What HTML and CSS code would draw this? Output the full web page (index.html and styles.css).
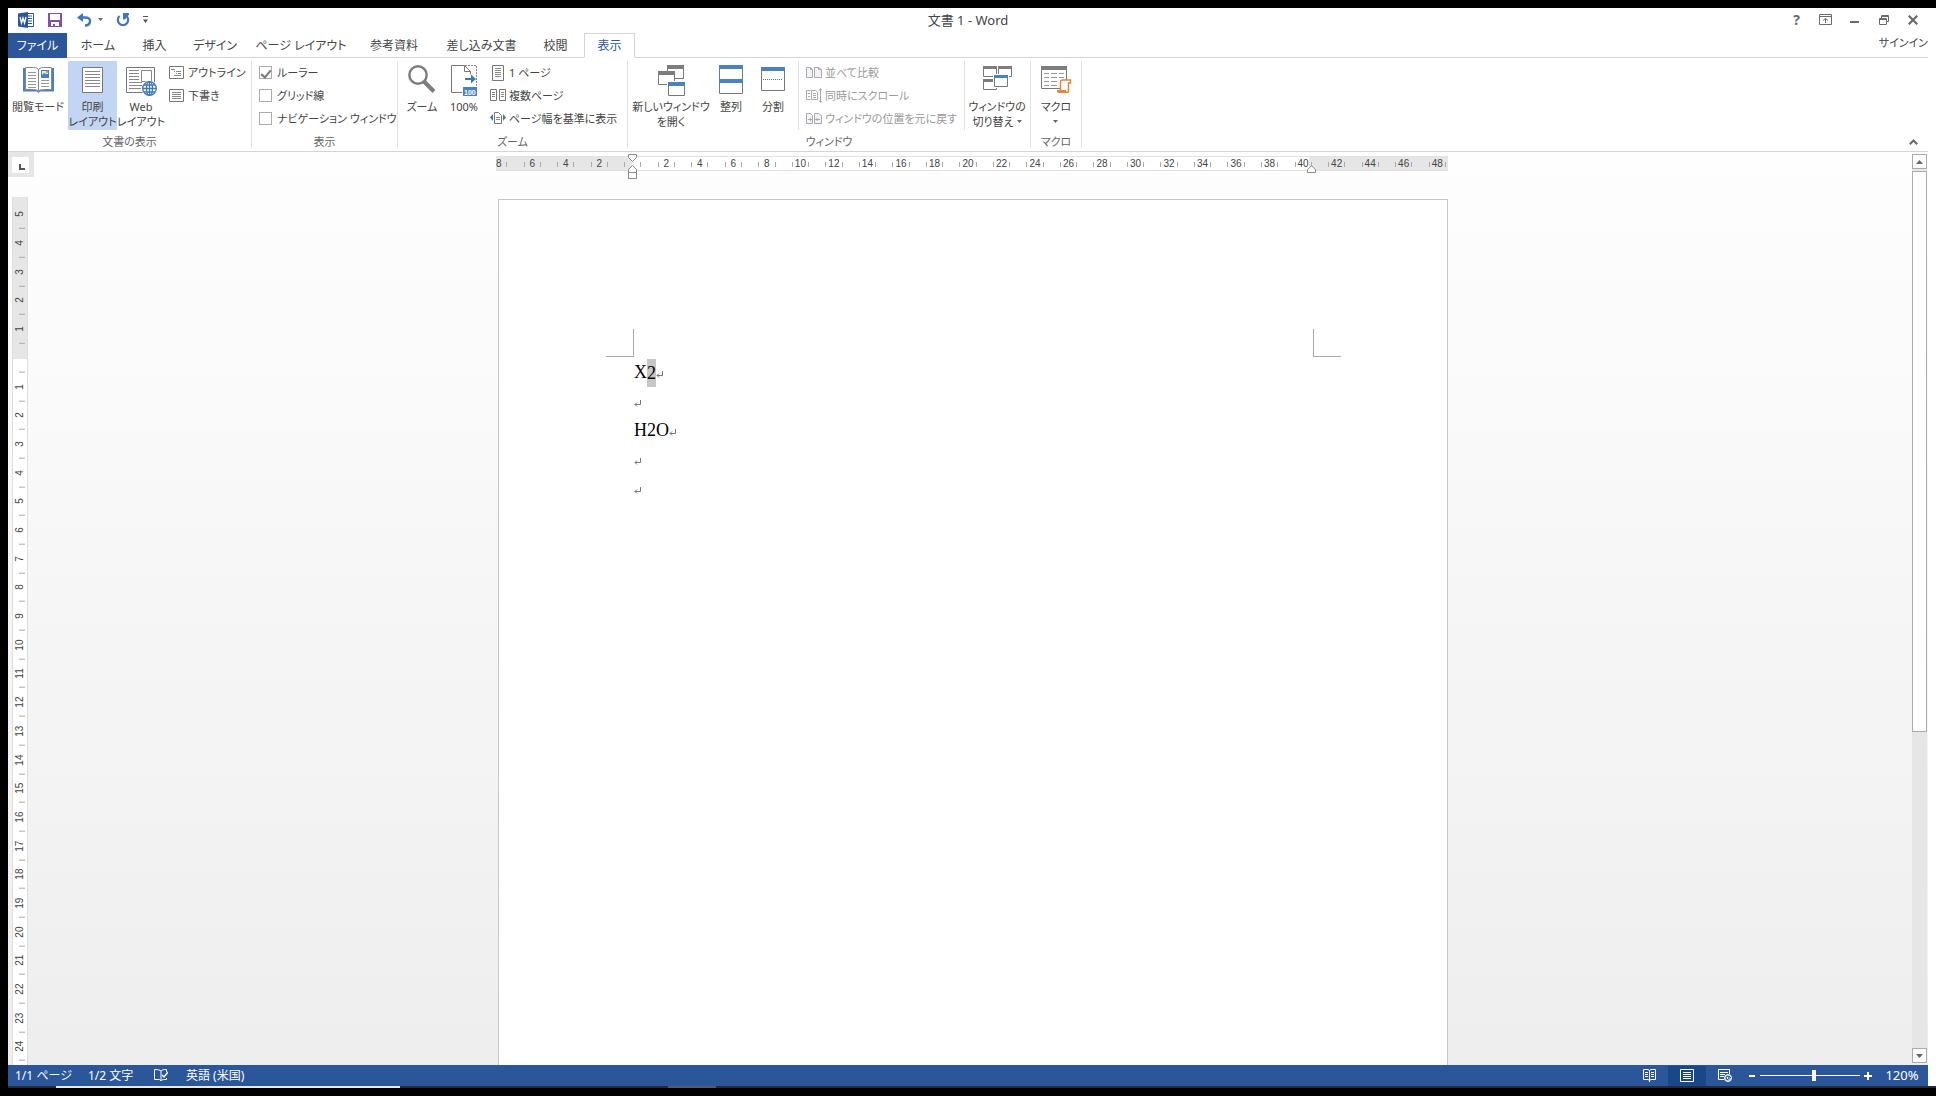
FILE: index.html
```html
<!DOCTYPE html>
<html lang="ja">
<head>
<meta charset="utf-8">
<title>文書 1 - Word</title>
<link rel="stylesheet" href="styles.css">
</head>
<body>
<div class="window">
  <header class="titlebar">
    <div class="quick-access">
      <svg class="word-logo" width="16" height="16" viewBox="0 0 16 16"><path d="M9 1.500h6.500v13H9z" fill="#fff" stroke="#2b579a"/><path d="M10 4h4M10 6.500h4M10 9h4M10 11.500h4" stroke="#2b579a"/><path d="M0 1.500L10 0v16L0 14.500z" fill="#2b579a"/><path d="M2 5l1.500 6L5 6l1.500 5L8 5" fill="none" stroke="#fff" stroke-width="1.300"/></svg>
      <button aria-label="上書き保存"><svg width="14" height="14" viewBox="0 0 14 14"><path d="M0 0h14v14H0zM2 1v6h10V1zM3 9v4h2v-2h2v2h4V9z" fill="#8550a8" fill-rule="evenodd"/></svg></button>
      <button class="undo" aria-label="元に戻す"><svg width="15" height="14" viewBox="0 0 15 14"><path d="M2 4.500h7c6 0 5 8-1 8" fill="none" stroke="#3f78b5" stroke-width="2.400"/><path d="M6 0v9L0 4.500z" fill="#3f78b5"/></svg><svg width="5" height="3" viewBox="0 0 5 3"><path d="M0 0h5L2.500 3z" fill="#666"/></svg></button>
      <button class="redo" aria-label="繰り返し"><svg width="14" height="14" viewBox="0 0 14 14"><path d="M3.500 3a5.200 5.200 0 1 0 7 0" fill="none" stroke="#3f78b5" stroke-width="2.200"/><path d="M7 0h6v1.500L9 6.500H7z" fill="#3f78b5"/></svg></button>
      <button class="customize" aria-label="クイック アクセスのカスタマイズ"><svg width="5" height="7" viewBox="0 0 5 7"><path d="M0 0h5v1H0zM0 3.500h5L2.500 7z" fill="#555"/></svg></button>
    </div>
    <h1 class="doc-title">文書 1 - Word</h1>
    <div class="window-controls">
      <button class="help" aria-label="ヘルプ">?</button>
      <button aria-label="リボンの表示オプション"><svg width="13" height="11" viewBox="0 0 13 11"><path d="M.5.500h12v10H.5zM.5 2.500h12M6.500 9V4.500M4 6.500l2.500-2 2.500 2" fill="none" stroke="#6a6a6a"/></svg></button>
      <button aria-label="最小化"><svg width="9" height="11" viewBox="0 0 9 11"><path d="M0 7h9v2H0z" fill="#6a6a6a"/></svg></button>
      <button aria-label="元のサイズに戻す"><svg width="10" height="10" viewBox="0 0 10 10"><path d="M2.500 3V.5h7v6H7.500M2.500 1.500h7M.5 3.500h7v6h-7zM.5 4.500h7" fill="none" stroke="#6a6a6a"/></svg></button>
      <button aria-label="閉じる"><svg width="10" height="10" viewBox="0 0 10 10"><path d="M.7.700l8.600 8.600M9.300.700L.7 9.300" stroke="#6a6a6a" stroke-width="2.200"/></svg></button>
    </div>
  </header>

  <nav class="tabs">
    <button class="tab file">ファイル</button>
    <button class="tab home">ホーム</button>
    <button class="tab insert">挿入</button>
    <button class="tab design">デザイン</button>
    <button class="tab layout">ページ レイアウト</button>
    <button class="tab refs">参考資料</button>
    <button class="tab mailings">差し込み文書</button>
    <button class="tab review">校閲</button>
    <button class="tab view">表示</button>
    <div class="tab-rest"><a class="signin" href="#">サインイン</a></div>
  </nav>

  <div class="ribbon">
    <section class="group views">
      <div class="group-body">
        <button class="big w60"><span class="icon"><svg width="31" height="28" viewBox="0 0 31 28"><path d="M0 3h3v22h25V3h3v23.500H17L15.500 28 14 26.500H0z" fill="#4a82bd"/><path d="M2.500 2.500h8c3 0 5 1 5 3 0-2 2-3 5-3h8v22h-8c-3 0-5 1-5 2 0-1-2-2-5-2h-8zM15.500 5v21" fill="#fff" stroke="#888"/><path d="M5 7.500h8M5 10.500h8M5 13.500h8M5 16.500h8M5 19.500h8M5 22.500h8M18 15.500h8M18 18.500h8M18 21.500h8" stroke="#999"/><path d="M18 5h8v8h-8z" fill="#4a82bd"/><path d="M19 6h6v3h-2l-2-1-2 2z" fill="#dce8f6"/><path d="M23 6h2v2h-2z" fill="#e8a23a"/></svg></span><span>閲覧モード</span></button>
        <button class="big w49 selected"><span class="icon"><svg width="21" height="28" viewBox="0 0 21 28"><path d="M.5 2.500h20v25H.5z" fill="#fff" stroke="#777"/><path d="M3 6.500h15M3 9.500h15M3 12.500h15M3 15.500h15M3 18.500h15M3 21.500h15" stroke="#888"/></svg></span><span>印刷<br>レイアウト</span></button>
        <button class="big w48"><span class="icon"><svg width="31" height="31" viewBox="0 0 31 31"><path d="M.5 2.500h28v25H.5z" fill="#fff" stroke="#777"/><path d="M3 5.500h10M3 8.500h10M3 11.500h10M3 14.500h10M3 17.500h13M3 20.500h13M3 23.500h12" stroke="#888"/><path d="M15.500 5.500h10v11h-10z" fill="#fff" stroke="#888"/><circle cx="23.500" cy="23.500" r="8" fill="#fff"/><g fill="none" stroke="#3f78b5" stroke-width="1.300"><circle cx="23.500" cy="23.500" r="6.800"/><ellipse cx="23.500" cy="23.500" rx="3" ry="6.800"/><path d="M23.500 17v14M17 23.500h13M18 20h11M18 27h11"/></g></svg></span><span>Web<br>レイアウト</span></button>
        <div class="rows">
          <button class="small"><svg width="16" height="14" viewBox="0 0 16 14"><path d="M.5.500h14v12H.5z" fill="#fff" stroke="#777"/><path d="M2 3.500h4M5 5.500h1M7 5.500h5M7 7.500h1M9 7.500h3M5 9.500h7" stroke="#888"/></svg>アウトライン</button>
          <button class="small"><svg width="16" height="14" viewBox="0 0 16 14"><path d="M.5.500h14v12H.5z" fill="#fff" stroke="#777"/><path d="M3 3.500h9M3 5.500h9M3 7.500h9M3 9.500h9" stroke="#888"/></svg>下書き</button>
        </div>
      </div>
      <h2>文書の表示</h2>
    </section>

    <section class="group show">
      <div class="group-body">
        <div class="rows">
          <label class="check"><input type="checkbox" checked>ルーラー</label>
          <label class="check"><input type="checkbox">グリッド線</label>
          <label class="check"><input type="checkbox">ナビゲーション ウィンドウ</label>
        </div>
      </div>
      <h2>表示</h2>
    </section>

    <section class="group zoom">
      <div class="group-body">
        <button class="big w40"><span class="icon"><svg width="28" height="28" viewBox="0 0 28 28"><circle cx="10" cy="10" r="8.700" fill="#fff" stroke="#7d7d7d" stroke-width="2.400"/><path d="M16 16.500l10 10" stroke="#7d7d7d" stroke-width="4"/></svg></span><span>ズーム</span></button>
        <button class="big w44"><span class="icon"><svg width="27" height="31" viewBox="0 0 27 31"><path d="M11 27.500H.5V.5h13l6 6v3M13.500.500v6h6" fill="none" stroke="#777"/><path d="M14 .5h11.500v21" fill="none" stroke="#888" stroke-dasharray="2 1"/><path d="M14 13h6V9.500l5 4.500-5 4.500V15h-6z" fill="#3f78b5"/><path d="M12 22h14v9H12z" fill="#4a82bd"/><text x="13" y="30" class="badge-text">100</text></svg></span><span>100%</span></button>
        <div class="rows">
          <button class="small"><svg width="16" height="16" viewBox="0 0 16 16"><path d="M2.500.500h11v15h-11z" fill="#fff" stroke="#777"/><path d="M5 3.500h6M5 5.500h6M5 7.500h6M5 9.500h6M5 11.500h6" stroke="#888"/></svg>1 ページ</button>
          <button class="small"><svg width="16" height="13" viewBox="0 0 16 13"><path d="M.5.500h6v11h-6zM9.500.500h6v11h-6z" fill="#fff" stroke="#777"/><path d="M2 3.500h3M2 5.500h3M2 7.500h3M11 3.500h3M11 5.500h3M11 7.500h3" stroke="#888"/></svg>複数ページ</button>
          <button class="small"><svg width="16" height="13" viewBox="0 0 16 13"><path d="M4.500.500h4l3 3v8h-7z" fill="#fff" stroke="#777"/><path d="M6 5.500h4M6 7.500h4" stroke="#888"/><path d="M3 2v7L0 5.500zM13 2v7l3-3.500z" fill="#3f78b5"/></svg>ページ幅を基準に表示</button>
        </div>
      </div>
      <h2>ズーム</h2>
    </section>

    <section class="group windows">
      <div class="group-body">
        <button class="big w80"><span class="icon"><svg width="27" height="31" viewBox="0 0 27 31"><g fill="#fff" stroke="#777"><path d="M9.500.500h16v13h-16z"/><path d="M.5 6.500h16v13H.5z"/></g><path d="M9 0h17v4H9zM0 6h17v4H0z" fill="#7d7d7d"/><path d="M9 16h18v15H9z" fill="#fff"/><path d="M10.500 17.500h16v13h-16z" fill="#fff" stroke="#777"/><path d="M10 17h17v4H10z" fill="#4a82bd"/></svg></span><span>新しいウィンドウ<br>を開く</span></button>
        <button class="big w40"><span class="icon"><svg width="24" height="29" viewBox="0 0 24 29"><path d="M.5.500h23v28H.5z" fill="#fff" stroke="#777"/><path d="M0 0h24v4H0zM0 14h24v4H0z" fill="#4a82bd"/></svg></span><span>整列</span></button>
        <button class="big w44"><span class="icon"><svg width="24" height="27" viewBox="0 0 24 27"><path d="M.5 2.500h23v23H.5z" fill="#fff" stroke="#777"/><path d="M0 2h24v4H0z" fill="#4a82bd"/><path d="M2 14.500h20" stroke="#3f78b5" stroke-dasharray="1 1"/></svg></span><span>分割</span></button>
        <div class="rows side">
          <button class="small" disabled><svg width="16" height="12" viewBox="0 0 16 12"><path d="M.5.500h4l2 2v8h-6zM8.500.500h4l3 2v8h-7zM4.500.500v2h2M12.500.500v2h3" fill="#f6f1f8" stroke="#aaa"/></svg>並べて比較</button>
          <button class="small" disabled><svg width="16" height="15" viewBox="0 0 16 15"><path d="M4.500 2.500h-4v9h4M5.500 2.500h4l2 2v7h-6zM2 5.500h2M2 8.500h2M7 5.500h3M7 7.500h3M7 9.500h3M14.500 1v13M13 2.500l1.500-2 1.500 2M13 12.500l1.500 2 1.500-2" fill="none" stroke="#aaa"/></svg>同時にスクロール</button>
          <button class="small" disabled><svg width="16" height="12" viewBox="0 0 16 12"><path d="M.5.500h4l2 2v8h-6zM8.500.500h4l3 2v8h-7zM2 6.500h4M4.500 5v3M9 6.500h5M11 5v3" fill="#f6f1f8" stroke="#aaa"/></svg>ウィンドウの位置を元に戻す</button>
        </div>
        <button class="big w64"><span class="icon"><svg width="29" height="27" viewBox="0 0 29 27"><path d="M.5 1.500h13v10H.5zM15.500 1.500h13v10h-13zM.5 14.500h13v10H.5z" fill="#fff" stroke="#777"/><path d="M0 1h14v3H0zM15 1h14v3H15zM0 14h14v3H0z" fill="#7d7d7d"/><path d="M10 9h16v14H10z" fill="#fff"/><path d="M11.500 10.500h13v11h-13z" fill="#fff" stroke="#777"/><path d="M11 10h14v3H11z" fill="#4a82bd"/></svg></span><span>ウィンドウの<br>切り替え<svg class="caret" width="5" height="3" viewBox="0 0 5 3"><path d="M0 0h5L2.500 3z" fill="#666"/></svg></span></button>
      </div>
      <h2>ウィンドウ</h2>
    </section>

    <section class="group macros">
      <div class="group-body">
        <button class="big w50"><span class="icon"><svg width="31" height="29" viewBox="0 0 31 29"><path d="M.5 1.500h25v22H.5z" fill="#fff" stroke="#777"/><path d="M0 1h26v4H0z" fill="#7d7d7d"/><path d="M3 8.500h5M10 8.500h6M18 8.500h5M3 12.500h5M10 12.500h6M18 12.500h5M3 16.500h5M10 16.500h6M3 20.500h5M10 20.500h6" stroke="#999"/><path d="M19 15h12v1l-3 2v10H16v-4h3z" fill="#fff"/><path d="M19.500 25V17c0-2 1-2 2-2h8v3h-2v8c0 2-3 2-3 0" fill="none" stroke="#e8833a" stroke-width="1.500"/><path d="M16 25h9v3h-7c-2 0-2-1-2-3z" fill="#e8833a"/></svg></span><span>マクロ<br><svg class="caret alone" width="5" height="3" viewBox="0 0 5 3"><path d="M0 0h5L2.500 3z" fill="#666"/></svg></span></button>
      </div>
      <h2>マクロ</h2>
    </section>
    <button class="collapse" aria-label="リボンを折りたたむ"><svg width="9" height="6" viewBox="0 0 9 6"><path d="M.8 5.200l3.700-3.700 3.700 3.700" fill="none" stroke="#6a6a6a" stroke-width="2"/></svg></button>
  </div>

  <main class="workspace">
    <div class="left-side">
      <button class="tab-stop" aria-label="左揃えタブ"><svg width="17" height="16" viewBox="0 0 17 16"><path d="M7 7v6h6v-2H9V7z" fill="#555"/></svg></button>
      <div class="v-ruler">
        <div class="v-scale margin"><span>5</span><span>4</span><span>3</span><span>2</span><span>1</span></div>
        <div class="v-scale body"><span></span><span>1</span><span>2</span><span>3</span><span>4</span><span>5</span><span>6</span><span>7</span><span>8</span><span>9</span><span>10</span><span>11</span><span>12</span><span>13</span><span>14</span><span>15</span><span>16</span><span>17</span><span>18</span><span>19</span><span>20</span><span>21</span><span>22</span><span>23</span><span>24</span></div>
      </div>
    </div>
    <div class="canvas">
      <div class="sheet-column">
        <div class="h-ruler">
          <div class="h-track">
            <div class="h-scale"><span>8</span><span>6</span><span>4</span><span>2</span><span></span><span>2</span><span>4</span><span>6</span><span>8</span><span>10</span><span>12</span><span>14</span><span>16</span><span>18</span><span>20</span><span>22</span><span>24</span><span>26</span><span>28</span><span>30</span><span>32</span><span>34</span><span>36</span><span>38</span><span>40</span><span>42</span><span>44</span><span>46</span><span>48</span></div>
          </div>
          <svg class="indent left" width="9" height="25" viewBox="0 0 9 25"><path d="M.5.500h8v3l-4 4-4-4zM4.500 11.500l4 4v3h-8v-3zM.5 18.500h8v6h-8z" fill="#fff" stroke="#888"/></svg>
          <svg class="indent right" width="9" height="8" viewBox="0 0 9 8"><path d="M4.500.700l4 4v2.800h-8V4.700z" fill="#fff" stroke="#888"/></svg>
        </div>
        <article class="page">
          <div class="corner-row"><i class="corner tl"></i><i class="corner tr"></i></div>
          <p>X<mark>2</mark><svg class="ret" width="7" height="7" viewBox="0 0 7 7"><path d="M6.500 0v4.500H1M3 2.500l-2 2 2 2" fill="none" stroke="#777"/></svg></p>
          <p><svg class="ret" width="7" height="7" viewBox="0 0 7 7"><path d="M6.500 0v4.500H1M3 2.500l-2 2 2 2" fill="none" stroke="#777"/></svg></p>
          <p>H2O<svg class="ret" width="7" height="7" viewBox="0 0 7 7"><path d="M6.500 0v4.500H1M3 2.500l-2 2 2 2" fill="none" stroke="#777"/></svg></p>
          <p><svg class="ret" width="7" height="7" viewBox="0 0 7 7"><path d="M6.500 0v4.500H1M3 2.500l-2 2 2 2" fill="none" stroke="#777"/></svg></p>
          <p><svg class="ret" width="7" height="7" viewBox="0 0 7 7"><path d="M6.500 0v4.500H1M3 2.500l-2 2 2 2" fill="none" stroke="#777"/></svg></p>
        </article>
      </div>
    </div>
    <div class="scrollbar">
      <button aria-label="上へスクロール"><svg width="7" height="4" viewBox="0 0 7 4"><path d="M3.500 0L7 4H0z" fill="#666"/></svg></button>
      <div class="track"><div class="thumb"></div></div>
      <button aria-label="下へスクロール"><svg width="7" height="4" viewBox="0 0 7 4"><path d="M0 0h7L3.500 4z" fill="#666"/></svg></button>
    </div>
  </main>

  <footer class="statusbar">
    <span class="pages">1/1 ページ</span>
    <span class="words">1/2 文字</span>
    <button class="proof" aria-label="文章校正"><svg width="14" height="13" viewBox="0 0 14 13"><path d="M7 12V2C6 1 4 .5.5.500v10H5c1 0 2 1 2 1.500zM7 2C8 1 9 .5 12.500.500V3M7 12c0-1 1-1.500 5.500-1.500V9" fill="none" stroke="#fff"/><path d="M8 6l2 2 4-5" fill="none" stroke="#fff" stroke-width="1.500"/></svg></button>
    <span class="language">英語 (米国)</span>
    <div class="status-right">
      <button class="mode" aria-label="閲覧モード"><svg width="13" height="13" viewBox="0 0 13 13"><path d="M.5.500H5l1.500 1L8 .5h4.500v10H8l-1.500 1-1.500-1H.5zM6.500 1v12M2 3.500h3M2 5.500h3M2 7.500h3M8 3.500h3M8 5.500h3M8 7.500h3" fill="none" stroke="#fff"/></svg></button>
      <button class="mode on" aria-label="印刷レイアウト"><svg width="14" height="13" viewBox="0 0 14 13"><path d="M.5.500h13v12H.5zM3 3.500h8M3 5.500h8M3 7.500h8M3 9.500h8" fill="none" stroke="#fff"/></svg></button>
      <button class="mode" aria-label="Web レイアウト"><svg width="14" height="13" viewBox="0 0 14 13"><path d="M6 10.500H.5V.5h11V5M2 3.500h8M2 5.500h5M2 7.500h4" fill="none" stroke="#fff"/><circle cx="10" cy="9" r="3.500" fill="#9cb8dd" stroke="#fff"/><path d="M8 8l2-1 1 2-2 2zM11 7l2 2" stroke="#2b579a" fill="#fff"/></svg></button>
      <button class="step" aria-label="縮小"><svg width="6" height="2" viewBox="0 0 6 2"><path d="M0 0h6v2H0z" fill="#fff"/></svg></button>
      <input class="zoom-slider" type="range" min="10" max="200" value="112" aria-label="ズーム">
      <button class="step" aria-label="拡大"><svg width="8" height="8" viewBox="0 0 8 8"><path d="M3 0h2v3h3v2H5v3H3V5H0V3h3z" fill="#fff"/></svg></button>
      <button class="percent">120%</button>
    </div>
  </footer>
</div>
<div class="taskbar"><i class="running"></i><i class="idle"></i></div>
</body>
</html>
```
FILE: styles.css
```css
* { box-sizing: border-box; }
body {
  margin: 0;
  height: 100vh;
  display: flex;
  flex-direction: column;
  padding: 8px 0 8px 8px;
  overflow: hidden;
  background: #000;
  color: #444;
  font: 12px/15px "Noto Sans", "Noto Sans CJK JP", sans-serif;
  font-feature-settings: "palt";
}
button {
  margin: 0; padding: 0; border: 0; background: none;
  color: inherit; font: inherit; font-feature-settings: inherit;
  display: flex; align-items: center; justify-content: center;
  white-space: nowrap;
}
svg { display: block; flex: none; }
h1, h2, p { margin: 0; font-weight: normal; }

.window {
  flex: 1; min-height: 0;
  display: flex; flex-direction: column;
  background: #fff;
  border-right: 8px solid #fff;
}

/* title bar */
.titlebar {
  display: grid;
  grid-template-columns: 1fr auto 1fr;
  align-items: center;
  height: 25px;
  padding-bottom: 2px;
}
.quick-access { display: flex; align-items: center; padding-left: 10px; gap: 14px; }
.undo { gap: 6px; margin-left: 1px; }
.redo { margin-left: -1px; }
.customize { margin-left: -1px; }
.doc-title { font-size: 13px; line-height: 18px; }
.window-controls { display: flex; justify-content: flex-end; padding-right: 1px; }
.window-controls button { width: 29px; height: 22px; }
.window-controls .help { font: bold 14px/22px "Noto Sans", sans-serif; color: #6a6a6a; }

/* tabs */
.tabs { display: flex; height: 25px; }
.tab { border-bottom: 1px solid #d4d4d4; }
.file { width: 59px; background: #2b579a; color: #fff; border-color: #2b579a; }
.home { width: 62px; }
.insert { width: 51px; }
.design { width: 70px; }
.layout { width: 102px; }
.refs { width: 84px; }
.mailings { width: 91px; }
.review { width: 57px; }
.view { width: 51px; color: #2b579a; border: 1px solid #d4d4d4; border-bottom-color: #fff; }
.tab-rest { flex: 1; display: flex; justify-content: flex-end; border-bottom: 1px solid #d4d4d4; }
.signin { font-size: 11px; line-height: 20px; color: #444; text-decoration: none; }

/* ribbon */
.ribbon { display: flex; height: 94px; padding: 3px 0; border-bottom: 1px solid #d4d4d4; font-size: 11px; }
.group { display: flex; flex-direction: column; justify-content: space-between; border-right: 1px solid #e1e1e1; }
.group-body { display: flex; height: 69px; }
.group h2 { font-size: 11px; line-height: 12px; text-align: center; color: #666; }
.views { width: 244px; }
.show { width: 146px; }
.zoom { width: 230px; }
.windows { width: 403px; }
.macros { width: 51px; }
.show .group-body { padding-left: 7px; }
.zoom .group-body { padding-left: 4px; }
.windows .group-body { padding-left: 3px; }
.big { flex-direction: column; justify-content: flex-start; padding-top: 4px; text-align: center; }
.icon { height: 34px; }
.selected { background: #c2d5f2; }
.w40 { width: 40px; }
.w44 { width: 44px; }
.w48 { width: 48px; }
.w49 { width: 49px; }
.w50 { width: 50px; }
.w60 { width: 60px; }
.w64 { width: 64px; }
.w80 { width: 80px; }
.rows { display: flex; flex-direction: column; padding-left: 4px; }
.side { width: 167px; margin-left: 3px; padding-left: 7px; border: solid #e1e1e1; border-width: 0 1px; }
.small, .check { display: flex; align-items: center; justify-content: flex-start; gap: 3px; height: 23px; white-space: nowrap; }
.small:disabled { color: #999; }
.show .rows { padding-left: 0; }
.check { gap: 5px; }
.check input {
  appearance: none;
  width: 13px; height: 13px; margin: 0;
  border: 1px solid #ababab; background: #fff;
  display: grid; place-items: center;
}
.check input:checked::before {
  content: "";
  width: 4px; height: 8px;
  border: solid #777; border-width: 0 2px 2px 0;
  transform: rotate(40deg);
}
.caret { display: inline-block; margin-left: 3px; vertical-align: 3px; }
.alone { margin-left: 0; }
.badge-text { font: bold 7px "Liberation Sans", sans-serif; fill: #fff; }
.collapse { margin-left: auto; align-self: flex-end; width: 29px; height: 12px; }

/* workspace */
.workspace { flex: 1; min-height: 0; display: flex; background: linear-gradient(#fefefe, #fdfdfd 60px, #eee); }
.left-side { display: flex; flex-direction: column; width: 26px; }
.tab-stop { height: 25px; padding-right: 1px; background: #e6e6e6; flex: none; }
.tab-stop svg { background: #fff; }
.v-ruler {
  flex: 1; width: 16px; margin: 20px 0 0 4px;
  display: flex; flex-direction: column;
  font: 10px/12px "Liberation Sans", sans-serif;
  border: solid #dedede; border-width: 0 1px;
}
.v-scale { display: grid; grid-auto-rows: 1fr; }
.v-scale span {
  display: flex; align-items: center; justify-content: center;
  min-height: 0;
  writing-mode: vertical-rl; transform: rotate(180deg);
  background: linear-gradient(#aaa, #aaa) 2px 0 / 6px 1px no-repeat;
}
.margin { flex: none; height: 162px; padding: 3px 0 15px; background: #e6e6e6; }
.body { flex: 1; margin-top: -15px; padding-bottom: 4px; background: linear-gradient(#e6e6e6 15px, #fff 15px); }
.canvas { flex: 1; display: flex; justify-content: center; padding-right: 2px; }
.sheet-column { width: 952px; display: flex; flex-direction: column; }
.h-ruler { position: relative; padding-top: 4px; }
.h-track {
  height: 15px; overflow: hidden;
  border: solid #e1e1e1; border-width: 1px 0;
  background: linear-gradient(90deg, #e6e6e6 136px, #fff 136px 813px, #e6e6e6 813px);
}
.h-scale { width: 972px; margin-left: -14px; display: flex; font: 10px/14px "Liberation Sans", sans-serif; color: #444; }
.h-scale span {
  flex: 1; height: 13px; text-align: center;
  background: linear-gradient(#aaa, #aaa) 25% 5px / 1px 5px no-repeat, linear-gradient(#aaa, #aaa) 75% 5px / 1px 5px no-repeat;
}
.indent { position: absolute; }
.indent.left { left: 132px; top: 2px; }
.indent.right { left: 811px; top: 13px; }
.page {
  flex: 1; margin: 28px 0 0 2px; padding: 129px 106px 0 107px;
  background: #fff; border: solid #c6c6c6; border-width: 1px 1px 0;
  color: #000; font: 18px/29px "Liberation Serif", serif;
}
.corner-row { display: flex; justify-content: space-between; margin-bottom: 1px; }
.corner { width: 28px; height: 28px; border: 0 solid #ababab; }
.tl { border-width: 0 1px 1px 0; }
.tr { border-width: 0 0 1px 1px; }
.page p { height: 29px; padding-left: 28px; display: flex; align-items: center; }
.page mark { background: #c6c6c6; color: inherit; height: 28px; }
.ret { margin-top: 3px; }

.scrollbar { display: flex; flex-direction: column; width: 16px; padding: 2px 1px 2px 0; }
.scrollbar button { height: 15px; flex: none; background: #fff; border: 1px solid #ababab; }
.track { flex: 1; padding-top: 2px; background: #e6e6e6; }
.thumb { height: 64%; background: #fff; border: 1px solid #ababab; }

/* status bar */
.statusbar { display: flex; align-items: center; height: 21px; padding-left: 7px; background: #2b579a; color: #fff; }
.pages { width: 73px; }
.words { width: 66px; }
.language { margin-left: 18px; }
.status-right { display: flex; align-items: center; margin-left: auto; }
.mode { width: 38px; height: 20px; }
.on { background: #19478a; }
.step { width: 16px; height: 20px; }
.zoom-slider { appearance: none; width: 100px; height: 12px; margin: 0; background: linear-gradient(#fff, #fff) 0 5px / 100% 1px no-repeat; }
.zoom-slider::-webkit-slider-thumb { appearance: none; width: 4px; height: 11px; background: #fff; }
.percent { width: 52px; font-size: 13px; }

.taskbar { display: flex; height: 2px; background: #222b38; }
.running { width: 344px; margin-left: 48px; background: #e8e8e8; }
.idle { width: 48px; margin-left: 268px; background: #555b63; }
```
